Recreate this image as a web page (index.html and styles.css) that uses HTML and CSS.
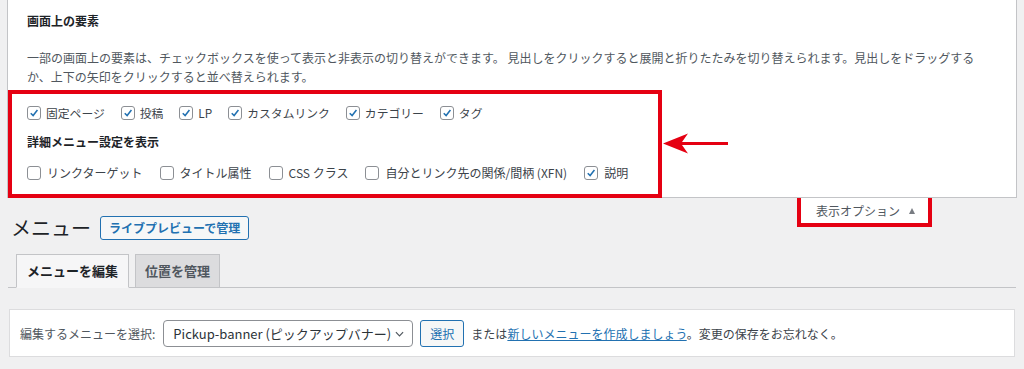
FILE: index.html
```html
<!DOCTYPE html>
<html lang="ja">
  <head>
    <meta charset="utf-8" />
    <meta name="viewport" content="width=device-width, initial-scale=1" />
    <link rel="stylesheet" href="styles.css">
  </head>
  <body>
    <div class="screen-meta">
      <div class="meta-text">
        <h5 class="meta-title">画面上の要素</h5>
        <p class="meta-desc">一部の画面上の要素は、チェックボックスを使って表示と非表示の切り替えができます。 見出しをクリックすると展開と折りたたみを切り替えられます。見出しをドラッグするか、上下の矢印をクリックすると並べ替えられます。</p>
      </div>

      <div class="highlight">
        <div class="check-row">
          <label class="opt"><span class="box"><svg viewBox="0 0 14 14"><path d="M3.2 7.2 L6 10 L11 3.6" /></svg></span>固定ページ</label>
          <label class="opt"><span class="box"><svg viewBox="0 0 14 14"><path d="M3.2 7.2 L6 10 L11 3.6" /></svg></span>投稿</label>
          <label class="opt"><span class="box"><svg viewBox="0 0 14 14"><path d="M3.2 7.2 L6 10 L11 3.6" /></svg></span>LP</label>
          <label class="opt"><span class="box"><svg viewBox="0 0 14 14"><path d="M3.2 7.2 L6 10 L11 3.6" /></svg></span>カスタムリンク</label>
          <label class="opt"><span class="box"><svg viewBox="0 0 14 14"><path d="M3.2 7.2 L6 10 L11 3.6" /></svg></span>カテゴリー</label>
          <label class="opt"><span class="box"><svg viewBox="0 0 14 14"><path d="M3.2 7.2 L6 10 L11 3.6" /></svg></span>タグ</label>
        </div>
        <h5 class="meta-sub">詳細メニュー設定を表示</h5>
        <div class="check-row wide">
          <label class="opt"><span class="box"></span>リンクターゲット</label>
          <label class="opt"><span class="box"></span>タイトル属性</label>
          <label class="opt"><span class="box"></span>CSS クラス</label>
          <label class="opt"><span class="box"></span>自分とリンク先の関係/間柄 (XFN)</label>
          <label class="opt"><span class="box"><svg viewBox="0 0 14 14"><path d="M3.2 7.2 L6 10 L11 3.6" /></svg></span>説明</label>
        </div>
      </div>

      <!-- annotation arrow -->
      <svg class="arrow" viewBox="0 0 66 21">
        <path d="M0 10.5 L25 0.5 L19 9 L65 9 L65 12 L19 12 L25 20.5 Z" />
      </svg>
    </div>

    <div class="meta-links">
      <div class="meta-tab">表示オプション <span class="tri"></span></div>
    </div>

    <div class="wrap">
      <div class="page-head">
        <h1>メニュー</h1>
        <a href="#" class="outline-btn">ライブプレビューで管理</a>
      </div>

      <nav class="nav-tabs">
        <a href="#" class="nav-tab active">メニューを編集</a>
        <a href="#" class="nav-tab">位置を管理</a>
      </nav>

      <div class="manage-menus">
        <span class="select-label">編集するメニューを選択:</span>
        <div class="select">
          <span>Pickup-banner (ピックアップバナー)</span>
          <svg class="chev" viewBox="0 0 10 6"><path d="M1 1 L5 5 L9 1" /></svg>
        </div>
        <button class="outline-btn small">選択</button>
        <span class="after">または<a href="#">新しいメニューを作成しましょう</a>。変更の保存をお忘れなく。</span>
      </div>
    </div>
  </body>
</html>
```

FILE: styles.css
```css
* {
  box-sizing: border-box;
}

body {
  margin: 0;
  background-color: #f0f0f1;
  color: #3c434a;
  font-family: "Noto Sans CJK JP", sans-serif;
  font-size: 12px;
}

/* top options panel */
.screen-meta {
  position: relative;
  margin: 0 7px 0 7px;
  width: 1010px;
  background: #fff;
  border: 1px solid #c3c4c7;
  border-top: none;
}

.meta-text {
  padding: 0 19px;
}

.meta-title {
  margin: 0;
  padding-top: 12px;
  font-size: 12px;
  line-height: 18px;
  font-weight: bold;
  color: #1d2327;
}

.meta-desc {
  width: 958px;
  margin: 18px 0 0;
  line-height: 19px;
  color: #50575e;
}

/* red annotation box */
.highlight {
  width: 654px;
  margin-top: 4px;
  margin-bottom: -1px;
  padding: 10px 15px 12px;
  border: 4px solid #e50012;
}

.check-row {
  display: flex;
  align-items: center;
  height: 18px;
}

.opt {
  display: flex;
  align-items: center;
  margin-right: 16px;
  font-size: 11.8px;
  line-height: 18px;
  white-space: nowrap;
}

.wide .opt {
  margin-right: 17px;
  font-size: 12px;
}

.wide .box {
  margin-right: 6px;
}

.box {
  width: 14px;
  height: 14px;
  margin-right: 5px;
  border: 1px solid #8c8f94;
  border-radius: 3px;
  background: #fff;
  display: flex;
}

.box svg {
  width: 12px;
  height: 12px;
}

.box path {
  fill: none;
  stroke: #2271b1;
  stroke-width: 1.8;
}

.meta-sub {
  margin: 11px 0 13px;
  font-size: 12px;
  line-height: 18px;
  font-weight: bold;
  color: #1d2327;
}

.arrow {
  position: absolute;
  left: 655px;
  top: 133px;
  width: 66px;
  height: 21px;
}

.arrow path {
  fill: #e50012;
}

/* screen options tab */
.meta-links {
  float: right;
  margin: -4px 92px 0 0;
  border: 4px solid #e50012;
}

.meta-tab {
  width: 127px;
  height: 25px;
  padding-left: 15px;
  background: #fff;
  color: #50575e;
  line-height: 25px;
  display: flex;
  align-items: center;
}

.tri {
  margin-left: 9px;
  width: 0;
  height: 0;
  border-left: 3.5px solid transparent;
  border-right: 3.5px solid transparent;
  border-bottom: 6px solid #787c82;
}

/* main area */
.page-head {
  display: flex;
  align-items: center;
  height: 24px;
  margin-top: 18px;
  padding-left: 11px;
}

.page-head h1 {
  margin: 0 9px 0 0;
  font-size: 20px;
  font-weight: normal;
  color: #1d2327;
  line-height: 24px;
}

.outline-btn {
  display: inline-block;
  height: 24px;
  padding: 0 8px;
  border: 1px solid #2271b1;
  border-radius: 3px;
  background: #f6f7f7;
  color: #2271b1;
  font-family: "Noto Sans CJK JP", sans-serif;
  font-size: 12px;
  font-weight: 600;
  line-height: 22px;
  text-decoration: none;
}

.nav-tabs {
  display: flex;
  margin: 14px 8px 0 8px;
  padding-left: 8px;
  border-bottom: 1px solid #c3c4c7;
}

.nav-tab {
  height: 34px;
  margin-right: 6px;
  margin-bottom: -1px;
  padding: 0 9px;
  border: 1px solid #c3c4c7;
  background: #dcdcde;
  color: #50575e;
  font-size: 13px;
  font-weight: bold;
  line-height: 32px;
  text-decoration: none;
}

.nav-tab.active {
  padding: 0 10px;
  background: #f6f6f7;
  border-bottom-color: #f6f6f7;
  color: #1d2327;
}

.manage-menus {
  display: flex;
  align-items: center;
  margin: 21px 9px 0 9px;
  padding: 10px 10px 9px;
  background: #fff;
  border: 1px solid #dcdcde;
}

.select-label {
  margin-right: 8px;
  color: #50575e;
}

.select {
  display: flex;
  align-items: center;
  justify-content: space-between;
  width: 250px;
  height: 27px;
  padding: 0 8px 0 9px;
  border: 1px solid #8c8f94;
  border-radius: 4px;
  color: #2c3338;
  font-size: 13px;
}

.chev {
  width: 9px;
  height: 6px;
}

.chev path {
  fill: none;
  stroke: #50575e;
  stroke-width: 1.3;
}

.outline-btn.small {
  height: 27px;
  margin-left: 7px;
  padding: 0 9px;
  font-weight: normal;
  line-height: 25px;
}

.after {
  margin-left: 7px;
  color: #3c434a;
}

.after a {
  color: #2271b1;
}
```
